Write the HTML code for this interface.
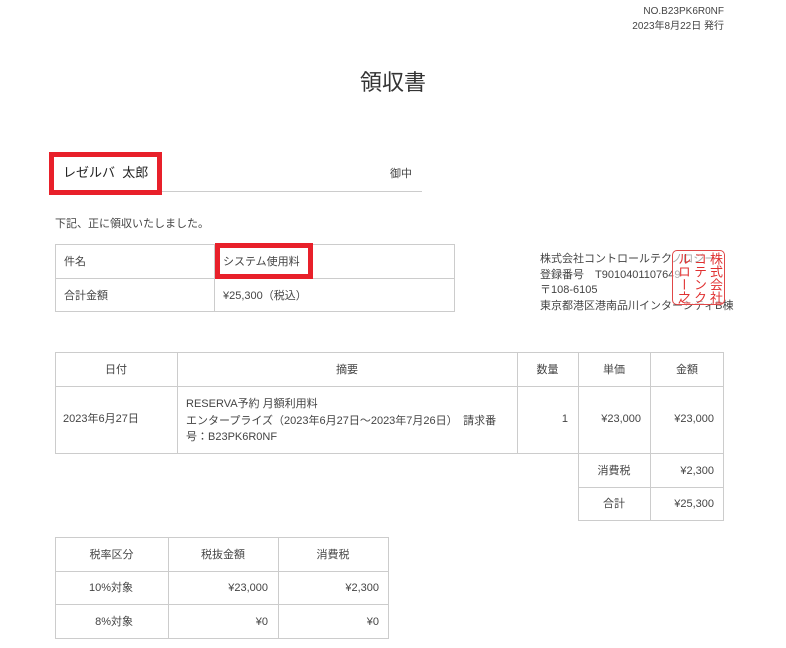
<!DOCTYPE html>
<html><head><meta charset="utf-8"><style>
*{margin:0;padding:0;box-sizing:border-box}
body{width:786px;height:648px;background:#fff;position:relative;overflow:hidden;font-family:"Liberation Sans","Noto Sans CJK JP",sans-serif;color:#444;font-size:11px}
.a{position:absolute;white-space:nowrap;line-height:14px}
.r{text-align:right}
.c{text-align:center}
.bx{position:absolute;border:1px solid #ccc}
.hl{position:absolute;height:1px;background:#ccc}
.vl{position:absolute;width:1px;background:#ccc}
.red{position:absolute;border:5px solid #e8202a}
</style></head><body>
<div class="a r" style="right:62px;top:5px;font-size:10px">NO.B23PK6R0NF</div>
<div class="a r" style="right:62px;top:20px;font-size:10px">2023年8月22日 発行</div>
<div class="a c" style="left:0;width:786px;top:69px;font-size:22px;line-height:28px;color:#333">領収書</div>

<div class="a" style="left:63px;top:164px;font-size:13px;line-height:18px;color:#222">レゼルバ &nbsp;太郎</div>
<div class="a" style="left:390px;top:167px">御中</div>
<div class="hl" style="left:55px;top:191px;width:367px"></div>
<div class="red" style="left:49px;top:152px;width:113px;height:43px"></div>

<div class="a" style="left:55px;top:217px">下記、正に領収いたしました。</div>

<div class="bx" style="left:55px;top:244px;width:400px;height:68px"></div>
<div class="hl" style="left:55px;top:278px;width:400px"></div>
<div class="vl" style="left:214px;top:244px;height:68px"></div>
<div class="a" style="left:64px;top:255px">件名</div>
<div class="a" style="left:64px;top:289px">合計金額</div>
<div class="a" style="left:223px;top:255px">システム使用料</div>
<div class="a" style="left:223px;top:289px">¥25,300（税込）</div>
<div class="red" style="left:215px;top:243px;width:98px;height:36px"></div>

<div class="a" style="left:540px;top:252px;line-height:15.5px">株式会社コントロールテクノロジー<br>登録番号　T9010401107649<br>〒108-6105<br>東京都港区港南品川インターシティB棟</div>
<div class="a" style="left:672px;top:250px;width:53px;height:55px;border:1px solid #e04848;border-radius:5px;background:rgba(255,255,255,0.55);color:#e03030;writing-mode:vertical-rl;font-size:13px;line-height:16px;padding:1px 1px;overflow:hidden">株式会社<br>コテンクト<br>ルロー之印</div>

<div class="bx" style="left:55px;top:352px;width:669px;height:102px"></div>
<div class="hl" style="left:55px;top:386px;width:669px"></div>
<div class="vl" style="left:177px;top:352px;height:102px"></div>
<div class="vl" style="left:517px;top:352px;height:102px"></div>
<div class="vl" style="left:578px;top:352px;height:169px"></div>
<div class="vl" style="left:650px;top:352px;height:169px"></div>
<div class="vl" style="left:723px;top:453px;height:68px"></div>
<div class="hl" style="left:578px;top:487px;width:146px"></div>
<div class="hl" style="left:578px;top:520px;width:146px"></div>
<div class="a c" style="left:55px;width:122px;top:363px">日付</div>
<div class="a c" style="left:177px;width:340px;top:363px">摘要</div>
<div class="a c" style="left:517px;width:61px;top:363px">数量</div>
<div class="a c" style="left:578px;width:72px;top:363px">単価</div>
<div class="a c" style="left:650px;width:74px;top:363px">金額</div>
<div class="a" style="left:63px;top:412px">2023年6月27日</div>
<div class="a" style="left:186px;top:396px;line-height:16.5px">RESERVA予約 月額利用料<br>エンタープライズ（2023年6月27日～2023年7月26日）　請求番<br>号：B23PK6R0NF</div>
<div class="a r" style="right:218px;top:412px">1</div>
<div class="a r" style="right:145px;top:412px">¥23,000</div>
<div class="a r" style="right:72px;top:412px">¥23,000</div>
<div class="a c" style="left:578px;width:72px;top:464px">消費税</div>
<div class="a r" style="right:72px;top:464px">¥2,300</div>
<div class="a c" style="left:578px;width:72px;top:497px">合計</div>
<div class="a r" style="right:72px;top:497px">¥25,300</div>

<div class="bx" style="left:55px;top:537px;width:334px;height:102px"></div>
<div class="hl" style="left:55px;top:571px;width:334px"></div>
<div class="hl" style="left:55px;top:604px;width:334px"></div>
<div class="vl" style="left:168px;top:537px;height:102px"></div>
<div class="vl" style="left:278px;top:537px;height:102px"></div>
<div class="a c" style="left:55px;width:113px;top:548px">税率区分</div>
<div class="a c" style="left:168px;width:110px;top:548px">税抜金額</div>
<div class="a c" style="left:278px;width:110px;top:548px">消費税</div>
<div class="a r" style="right:653px;top:581px">10%対象</div>
<div class="a r" style="right:518px;top:581px">¥23,000</div>
<div class="a r" style="right:407px;top:581px">¥2,300</div>
<div class="a r" style="right:653px;top:615px">8%対象</div>
<div class="a r" style="right:518px;top:615px">¥0</div>
<div class="a r" style="right:407px;top:615px">¥0</div>
</body></html>
